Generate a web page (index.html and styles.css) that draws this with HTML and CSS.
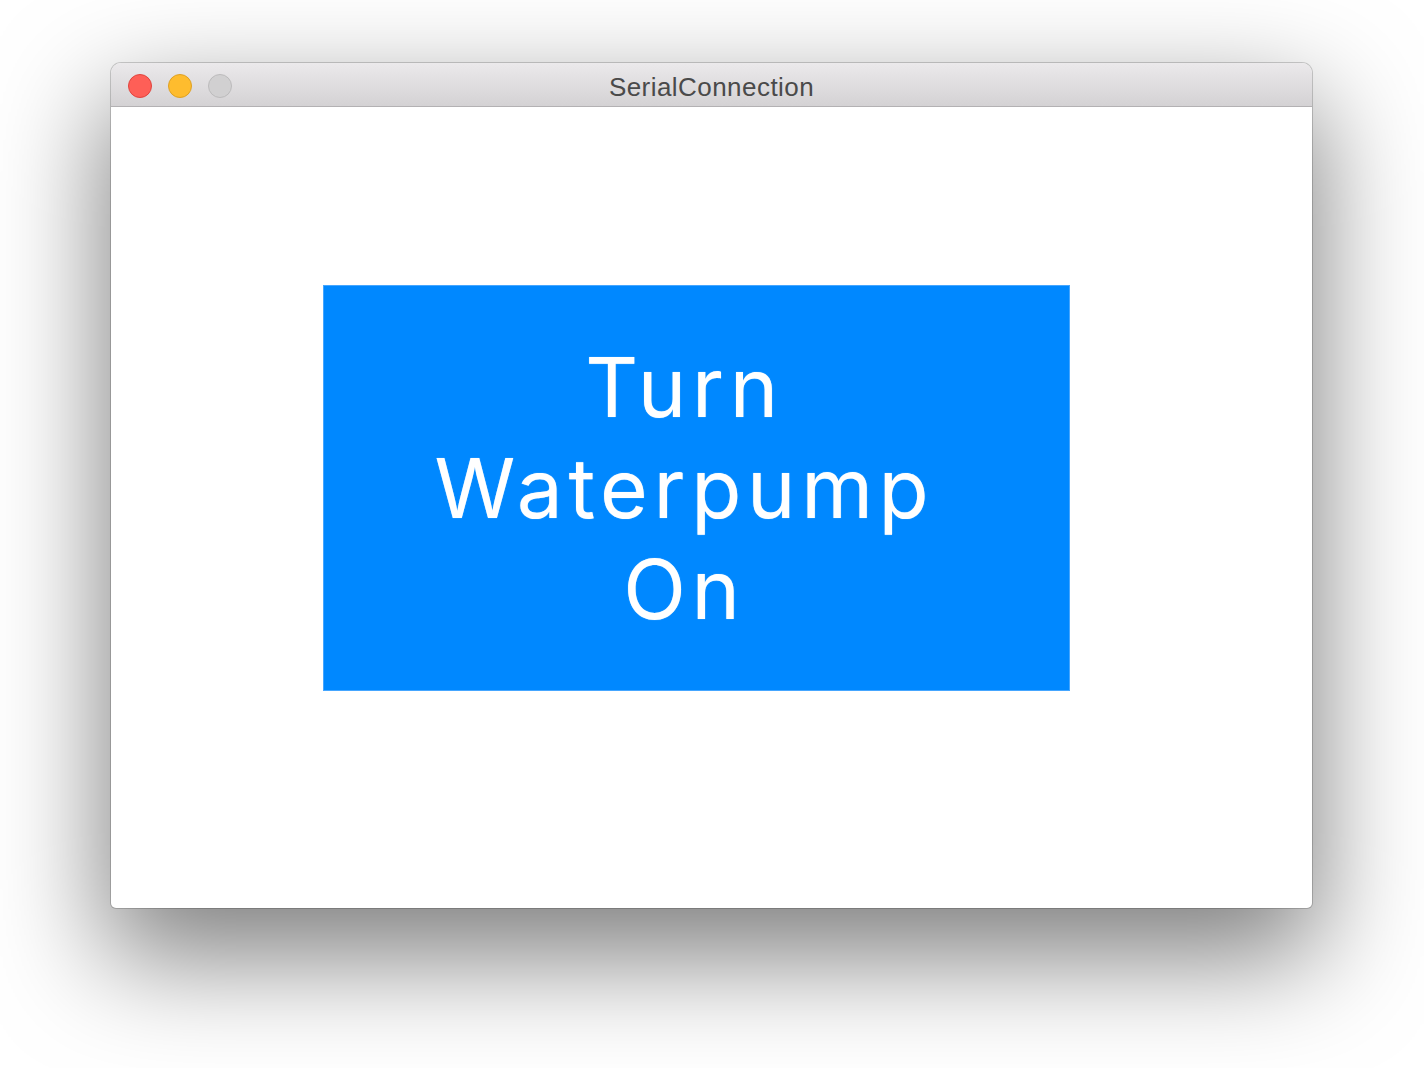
FILE: index.html
```html
<!DOCTYPE html>
<html lang="en">
<head>
<meta charset="utf-8">
<title>SerialConnection</title>
<link rel="stylesheet" href="styles.css">
</head>
<body>
<div class="window">
  <div class="titlebar">
    <div class="lights">
      <span class="light close"></span>
      <span class="light minimize"></span>
      <span class="light zoom"></span>
    </div>
    <div class="title">SerialConnection</div>
  </div>
  <div class="content">
    <button class="pump-btn" type="button"><span class="label">Turn<br>Waterpump<br>On</span></button>
  </div>
</div>
</body>
</html>
```

FILE: styles.css
```css
html, body {
  margin: 0;
  padding: 0;
  background: #ffffff;
}

body {
  padding: 63px 0 0 111px;
  height: 1068px;
  box-sizing: border-box;
  overflow: hidden;
}

.window {
  width: 1201px;
  height: 845px;
  border-radius: 10px 10px 5px 5px;
  overflow: hidden;
  box-shadow: 0 44px 110px 6px rgba(0, 0, 0, 0.5), 0 0 0 1px rgba(0, 0, 0, 0.18);
  display: flex;
  flex-direction: column;
  background: #ffffff;
}

.titlebar {
  position: relative;
  height: 43px;
  flex: none;
  background: linear-gradient(#ebe9eb, #d4d2d4);
  border-bottom: 1px solid #b3b1b3;
  display: flex;
  align-items: center;
  justify-content: center;
}

.lights {
  position: absolute;
  left: 17px;
  top: 11px;
  display: flex;
  gap: 16px;
}

.light {
  width: 24px;
  height: 24px;
  border-radius: 50%;
  box-sizing: border-box;
  display: block;
}

.close { background: #fe5f57; border: 1px solid #e0443e; }
.minimize { background: #febc2e; border: 1px solid #dea123; }
.zoom { background: #d1d0d1; border: 1px solid #bcbbbc; }

.title {
  font-family: "Liberation Sans", Arial, sans-serif;
  font-size: 26px;
  color: #4a4a4a;
  letter-spacing: 0.45px;
  padding-top: 5px;
}

.content {
  flex: 1;
  padding: 178px 0 0 212px;
}

.pump-btn {
  width: 747px;
  height: 406px;
  margin: 0;
  padding: 0 24px 0 0;
  background: #0088ff;
  border: 1px solid #45a6ff;
  color: #ffffff;
  font-family: Inter, "Liberation Sans", Arial, sans-serif;
  font-size: 82px;
  line-height: 101px;
  letter-spacing: 5.6px;
  text-align: center;
  display: flex;
  align-items: center;
  justify-content: center;
  box-sizing: border-box;
}

.label {
  display: block;
  text-shadow: 0 0 1px rgba(255, 255, 255, 0.6);
}
```
